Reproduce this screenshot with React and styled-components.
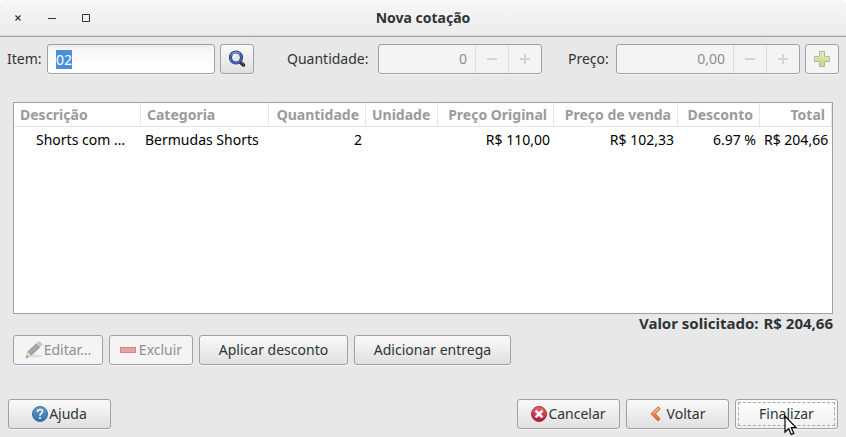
import React, { useEffect, useRef } from 'react';
import styled, { createGlobalStyle } from 'styled-components';

const GlobalStyle = createGlobalStyle`
    * {
        box-sizing: border-box;
    }
    body {
        margin: 0;
        background: #fff;
        color: #2e3436;
        font-family: "Noto Sans", "Open Sans", sans-serif;
        font-size: 14px;
        line-height: 20px;
    }
    button, input {
        font: inherit;
        color: inherit;
        margin: 0;
    }
`;

const Window = styled.div`
    min-height: 100vh;
    display: flex;
    flex-direction: column;
    background: #e8e8e8;
    border-radius: 6px 6px 0 0;
`;
const TitleBar = styled.header`
    display: grid;
    grid-template-columns: 1fr auto 1fr;
    align-items: center;
    height: 37px;
    padding: 0 12px;
    border-bottom: 1px solid #a1a1a1;
    border-radius: 6px 6px 0 0;
    background: linear-gradient(#f7f7f7, #ebebeb);
    box-shadow: inset 0 -1px #dadada;
`;
const WindowButtons = styled.div`
    display: flex;
    gap: 22px;
`;
const WindowButton = styled.button`
    width: 12px;
    height: 12px;
    padding: 0;
    border: none;
    background: none;

    svg {
        display: block;
    }
`;
const Title = styled.h1`
    margin: 0;
    font-size: 14px;
    line-height: 20px;
`;
const Form = styled.form`
    display: flex;
    align-items: center;
    padding: 7px 7px 0;
`;
const Label = styled.label`
    width: ${props => props.$width};
    flex: none;
`;
const Entry = styled.input`
    flex: 1 1 168px;
    min-width: 0;
    height: 30px;
    padding: 0 8px;
    border: 1px solid #a1a1a1;
    border-radius: 3px;
    background: linear-gradient(#ececec, #f8f8f8 5px, #fff);
    box-shadow: 0 1px #f5f5f5;
    line-height: 17px;
    outline: none;

    &::selection {
        background: #4a90d9;
        color: #fff;
    }
`;
const Spin = styled.div`
    flex: 1 1 ${props => props.$basis};
    min-width: 0;
    display: flex;
    height: 30px;
    border: 1px solid #a1a1a1;
    border-radius: 3px;
    background: #f4f4f4;
    box-shadow: 0 1px #f5f5f5;
    color: #8d9091;
`;
const SpinInput = styled.input`
    flex: 1;
    min-width: 0;
    padding: 0 8px;
    border: none;
    background: none;
    text-align: right;
`;
const SpinButton = styled.button`
    width: 33px;
    padding: 0;
    display: flex;
    align-items: center;
    justify-content: center;
    border: none;
    border-left: 1px solid #dcdcdc;
    background: none;
`;
const Button = styled.button`
    flex: none;
    display: flex;
    align-items: center;
    justify-content: center;
    gap: 1px;
    width: ${props => props.$width || '103px'};
    height: 30px;
    padding: 0;
    border: 1px solid #a1a1a1;
    border-radius: 3px;
    background: linear-gradient(#fafafa, #e0e0e0);
    box-shadow: 0 1px #f5f5f5;
    white-space: nowrap;

    &:disabled {
        background: #f4f4f4;
        color: #8d9091;
    }
`;
const IconButton = styled(Button)`
    width: 34px;
    margin-left: 5px;
`;
const DefaultButton = styled(Button)`
    position: relative;
    background: linear-gradient(#fff, #f1f1f1);
    outline: 1px dashed #a8a8a8;
    outline-offset: -4px;
`;
const Pointer = styled.svg`
    position: absolute;
    left: 48px;
    top: 15px;
    pointer-events: none;
`;
const Main = styled.main`
    flex: 1;
    display: flex;
    flex-direction: column;
    padding: 28px 13px 34px;
`;
const TreeView = styled.div`
    flex: 1;
    min-height: 120px;
    border: 1px solid #a1a1a1;
    background: #fff;
`;
const Table = styled.table`
    width: 100%;
    table-layout: fixed;
    border-collapse: separate;
    border-spacing: 0;
`;
const HeaderCell = styled.th`
    height: 24px;
    padding: 0 6px;
    border-right: 1px solid #e6e6e6;
    border-bottom: 1px solid #e6e6e6;
    color: #999b9c;
    text-align: ${props => props.$align};
    white-space: nowrap;
`;
const Cell = styled.td`
    height: 26px;
    padding: 0 4px;
    color: #000;
    text-align: ${props => props.$align};
    white-space: nowrap;

    &:first-child {
        padding-left: 22px;
    }
`;
const Total = styled.p`
    display: flex;
    justify-content: flex-end;
    gap: 5px;
    margin: 0 0 3px;
    font-size: 15px;
    font-weight: bold;
    line-height: 18px;
`;
const Actions = styled.div`
    display: flex;
    gap: 6px;
`;
const Footer = styled.footer`
    display: flex;
    gap: 6px;
    padding: 0 8px 8px;
`;
const Spacer = styled.div`
    flex: 1;
`;
const FixedGap = styled.div`
    flex: none;
    width: ${props => props.$width};
`;

const MinusGlyph = () => (
    <svg width="10" height="10" viewBox="0 0 10 10"><path d="M0 4h10v2H0z" fill="#d3d4d4" /></svg>
);

const PlusGlyph = () => (
    <svg width="10" height="10" viewBox="0 0 10 10"><path d="M0 4h4V0h2v4h4v2H6v4H4V6H0z" fill="#d3d4d4" /></svg>
);

const SearchIcon = () => (
    <svg width="18" height="18" viewBox="0 0 18 18">
        <path d="M12 12l3.500 3" stroke="#2b2622" strokeWidth="3.500" strokeLinecap="round" />
        <path d="M13 12l2.500 2.500" stroke="#8a7f76" strokeWidth="1" strokeLinecap="round" />
        <circle cx="8" cy="7.5" r="5.5" fill="#e3e5e8" stroke="#28336f" strokeWidth="3.2" />
        <circle cx="8" cy="7.5" r="5.5" fill="none" stroke="#4a62b4" strokeWidth="2" />
        <path d="M3.5 5A5.5 5.5 0 0 1 12 3.7" fill="none" stroke="#7ba3dc" strokeWidth="1.2" />
        <path d="M5.5 8a3 3 0 0 1 3-3.5" fill="none" stroke="#fff" strokeWidth="1.5" />
    </svg>
);

const AddIcon = () => (
    <svg width="18" height="18" viewBox="0 0 18 18">
        <defs>
            <linearGradient id="add" x2="0" y2="1">
                <stop stopColor="#e0e9b2" />
                <stop offset="1" stopColor="#c8d68c" />
            </linearGradient>
        </defs>
        <path d="M6.5 1.5h5v5h5v5h-5v5h-5v-5h-5v-5h5z" fill="url(#add)" stroke="#a9bd92" />
        <path d="M7.5 2.5h3v5h5" fill="none" stroke="#e0e9b8" />
        <path d="M2.5 10.5v-3h5v-5" fill="none" stroke="#e0e9b8" />
    </svg>
);

const PencilIcon = () => (
    <svg width="18" height="18" viewBox="0 0 18 18">
        <ellipse cx="10" cy="15" rx="7" ry="1.5" fill="#dedede" />
        <path d="M3 10.5L6.5 14 1 17z" fill="#eee5c3" stroke="#b7b3a2" strokeWidth=".7" />
        <path d="M1 17l1-2.5 1.5 1.3z" fill="#777" />
        <path d="M3 10.5L11.5 2.5 15 6 6.5 14z" fill="#a4a4a4" stroke="#929292" strokeWidth=".8" />
        <path d="M5 11.5L12.500 4" stroke="#b8b8b8" />
        <path d="M11.5 2.5L15 6l1-1.1-3.3-3.6z" fill="#d9d9d9" />
        <path d="M12.7 1.3C14 .1 17.7 2.5 16.800 4L16 4.900z" fill="#ecc4dc" stroke="#c9a1bb" strokeWidth=".7" />
    </svg>
);

const RemoveIcon = () => (
    <svg width="18" height="8" viewBox="0 0 18 8">
        <path d="M.5 1.5h15v5H.5z" fill="#e6a0a0" stroke="#cf8585" />
        <path d="M1.5 2.5h13v3h-13z" fill="none" stroke="#e8a8a8" />
    </svg>
);

const HelpIcon = () => (
    <svg width="16" height="16" viewBox="0 0 16 16">
        <defs>
            <linearGradient id="help" x2="0" y2="1">
                <stop stopColor="#6a9fcc" />
                <stop offset="1" stopColor="#2f70ad" />
            </linearGradient>
        </defs>
        <circle cx="8" cy="8" r="7.5" fill="url(#help)" stroke="#33699c" />
        <path d="M5.500 6C5.500 2.700 10.500 2.800 10.500 5.500 10.500 7.500 8 7.500 8 9.700" fill="none" stroke="#fff" strokeWidth="1.6" />
        <circle cx="8" cy="12" r="1.1" fill="#fff" />
    </svg>
);

const CancelIcon = () => (
    <svg width="16" height="16" viewBox="0 0 16 16">
        <defs>
            <linearGradient id="cancel" x2="0" y2="1">
                <stop stopColor="#ea6a66" />
                <stop offset="1" stopColor="#b01438" />
            </linearGradient>
        </defs>
        <circle cx="8" cy="8" r="7.5" fill="url(#cancel)" stroke="#ab2a40" />
        <path d="M5.5 5.5l5 5M10.5 5.5l-5 5" stroke="#fff" strokeWidth="2.6" strokeLinecap="square" />
    </svg>
);

const BackIcon = () => (
    <svg width="16" height="16" viewBox="0 0 16 16">
        <defs>
            <linearGradient id="back" x2="0" y2="1">
                <stop stopColor="#f7b07a" />
                <stop offset="1" stopColor="#ed5d35" />
            </linearGradient>
        </defs>
        <path d="M8 .8L1 7.800 8 15l2.200-2L5.500 7.800 10.200 2.700z" fill="url(#back)" stroke="#c9602f" strokeWidth=".9" strokeLinejoin="round" />
        <path d="M8.3 2.300L3 7.800" stroke="#fcd0a2" strokeWidth=".8" />
    </svg>
);

const columns = [
    { title: 'Descrição', width: 127, align: 'left' },
    { title: 'Categoria', width: 128, align: 'left' },
    { title: 'Quantidade', width: 97, align: 'right' },
    { title: 'Unidade', width: 72, align: 'left' },
    { title: 'Preço Original', width: 116, align: 'right' },
    { title: 'Preço de venda', width: 124, align: 'right' },
    { title: 'Desconto', width: 82, align: 'right' },
    { title: 'Total', width: 72, align: 'right' },
];

const rows = [
    ['Shorts com …', 'Bermudas Shorts', '2', '', 'R$ 110,00', 'R$ 102,33', '6.97 %', 'R$ 204,66'],
];

const SpinField = ({ id, value, basis }) => (
    <Spin $basis={basis}>
        <SpinInput id={id} defaultValue={value} disabled />
        <SpinButton type="button" aria-label="Diminuir" disabled><MinusGlyph /></SpinButton>
        <SpinButton type="button" aria-label="Aumentar" disabled><PlusGlyph /></SpinButton>
    </Spin>
);

const App = () => {
    const itemRef = useRef(null);

    useEffect(() => {
        itemRef.current.focus();
        itemRef.current.select();
    }, []);

    return (
        <>
            <GlobalStyle />
            <Window>
                <TitleBar>
                    <WindowButtons>
                        <WindowButton aria-label="Fechar">
                            <svg width="12" height="12" viewBox="0 0 12 12"><path d="M3.5 3.5l5 5M8.5 3.5l-5 5" stroke="#2e3436" strokeWidth="1.2" /></svg>
                        </WindowButton>
                        <WindowButton aria-label="Minimizar">
                            <svg width="12" height="12" viewBox="0 0 12 12"><path d="M2 6h8v1H2z" fill="#2e3436" /></svg>
                        </WindowButton>
                        <WindowButton aria-label="Maximizar">
                            <svg width="12" height="12" viewBox="0 0 12 12"><path d="M2.5 2.5h7v7h-7z" fill="none" stroke="#2e3436" /></svg>
                        </WindowButton>
                    </WindowButtons>
                    <Title>Nova cotação</Title>
                </TitleBar>
                <Form>
                    <Label htmlFor="item" $width="40px">Item:</Label>
                    <Entry id="item" defaultValue="02" ref={itemRef} />
                    <IconButton type="button" aria-label="Pesquisar"><SearchIcon /></IconButton>
                    <FixedGap $width="33px" />
                    <Label htmlFor="quantidade" $width="91px">Quantidade:</Label>
                    <SpinField id="quantidade" value="0" basis="164px" />
                    <FixedGap $width="26px" />
                    <Label htmlFor="preco" $width="48px">Preço:</Label>
                    <SpinField id="preco" value="0,00" basis="184px" />
                    <IconButton type="button" aria-label="Adicionar" disabled><AddIcon /></IconButton>
                </Form>
                <Main>
                    <TreeView>
                        <Table>
                            <colgroup>
                                {columns.map(column => <col key={column.title} width={column.width} />)}
                            </colgroup>
                            <thead>
                                <tr>
                                    {columns.map(column => (
                                        <HeaderCell key={column.title} $align={column.align}>{column.title}</HeaderCell>
                                    ))}
                                </tr>
                            </thead>
                            <tbody>
                                {rows.map((row, index) => (
                                    <tr key={index}>
                                        {row.map((value, i) => (
                                            <Cell key={columns[i].title} $align={columns[i].align}>{value}</Cell>
                                        ))}
                                    </tr>
                                ))}
                            </tbody>
                        </Table>
                    </TreeView>
                    <Total><span>Valor solicitado:</span><span>R$ 204,66</span></Total>
                    <Actions>
                        <Button $width="90px" disabled><PencilIcon />Editar...</Button>
                        <Button $width="84px" disabled><RemoveIcon />Excluir</Button>
                        <Button $width="149px">Aplicar desconto</Button>
                        <Button $width="157px">Adicionar entrega</Button>
                    </Actions>
                </Main>
                <Footer>
                    <Button><HelpIcon />Ajuda</Button>
                    <Spacer />
                    <Button><CancelIcon />Cancelar</Button>
                    <Button><BackIcon />Voltar</Button>
                    <DefaultButton>
                        Finalizar
                        <Pointer width="13" height="21" viewBox="0 0 13 21">
                            <path d="M1 1v16l3.700-3.500 2.500 6 2.600-1.100-2.500-5.900H12z" fill="#fff" stroke="#000" strokeWidth="1.2" />
                        </Pointer>
                    </DefaultButton>
                </Footer>
            </Window>
        </>
    );
};

export default App;
